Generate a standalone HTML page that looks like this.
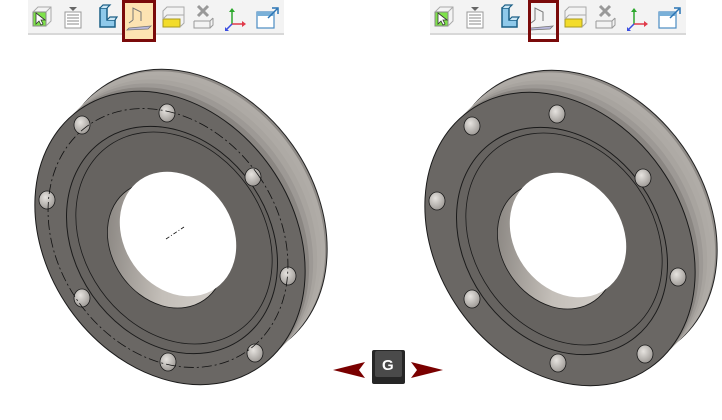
<!DOCTYPE html>
<html><head><meta charset="utf-8"><style>
html,body{margin:0;padding:0;background:#fff;width:722px;height:420px;overflow:hidden}
svg{display:block}
</style></head><body>
<svg width="722" height="420" viewBox="0 0 722 420" xmlns="http://www.w3.org/2000/svg">
<defs>
<linearGradient id="wall" x1="0" y1="0" x2="1" y2="1">
<stop offset="0" stop-color="#77736f"/><stop offset="0.5" stop-color="#c4bfb9"/><stop offset="1" stop-color="#dad6d1"/>
</linearGradient>
<radialGradient id="hole" cx="0.4" cy="0.35" r="0.7">
<stop offset="0" stop-color="#e6e3df"/><stop offset="1" stop-color="#9b9793"/>
</radialGradient>
<g id="tb">
<rect x="0" y="0" width="256" height="34" fill="#f3f3f3"/>
<rect x="0" y="33" width="256" height="2" fill="#d8d8d8"/>
<rect x="5" y="12" width="13" height="14" fill="#7ee24a" stroke="#888"/>
<path d="M5 12 l5 -5 h13 v14 l-5 5 M18 12 l5 -5" fill="none" stroke="#aaa"/>
<path d="M8 13 l0 11 l3 -3 l2 4 l2 -1 l-2 -4 l4 0z" fill="#fff" stroke="#333" stroke-width="0.8"/>
<path d="M41 7 h8 l-4 4z" fill="#666"/>
<rect x="37" y="12" width="16" height="16" fill="#fff" stroke="#999"/>
<path d="M39 15h12M39 18h12M39 21h12M39 24h12" stroke="#888"/>
<path d="M72 8 h7 v12 h8 v7 h-15z" fill="#8fc9ea" stroke="#1b5f86" stroke-width="1.5"/>
<path d="M72 8 l3 -3 h7 l-3 3 M79 20 l3 -3 h7 l-2 3" fill="#cde7f5" stroke="#1b5f86" stroke-width="1.2"/>
<path d="M105 20 v-12 l8 4 v9 M105 20 l-4 3" fill="none" stroke="#777" stroke-width="1"/>
<path d="M101 28 l22 -2 l-3 3 l-21 1z" fill="#b9b9dd" stroke="#777" stroke-width="0.8"/>
<rect x="135" y="19" width="17" height="8" fill="#f3dc2a" stroke="#aa9a20"/>
<path d="M135 19 l4 -4 h17 v8 l-4 4 M135 19 v-8 l4 -4 h17 v8" fill="none" stroke="#aaa"/>
<path d="M170 6 l10 10 M180 6 l-10 10" stroke="#999" stroke-width="3"/>
<path d="M166 21 h16 l3 -3 M166 21 v7 h16 v-7 M182 28 l3 -3 v-7" fill="none" stroke="#999"/>
<path d="M204 24 v-14" stroke="#2ca82c" stroke-width="1.5"/><path d="M201 12 l3 -4 l3 4z" fill="#2ca82c"/>
<path d="M204 24 h12" stroke="#e03a4a" stroke-width="1.5"/><path d="M214 21 l4 3 l-4 3z" fill="#e03a4a"/>
<path d="M204 24 l-5 5" stroke="#3a4de0" stroke-width="1.5"/><path d="M197 27 l0 4 l4 0z" fill="#3a4de0"/>
<rect x="229" y="12" width="17" height="16" fill="#fff" stroke="#4a8cc2" stroke-width="1.2"/>
<rect x="229" y="12" width="17" height="4" fill="#7ab0d8"/>
<path d="M240 18 l9 -9 M244 8 h6 v6" fill="none" stroke="#2b75b5" stroke-width="1.5"/>
</g>
</defs>

<use href="#tb" x="28" y="0"/>
<rect x="123.5" y="1.5" width="31" height="39" fill="#fde3b2" stroke="#7a0a0a" stroke-width="3"/>
<g transform="translate(28,0)">
<path d="M105 20 v-12 l8 4 v9 M105 20 l-4 3" fill="none" stroke="#777" stroke-width="1"/>
<path d="M101 28 l22 -2 l-3 3 l-21 1z" fill="#b9b9dd" stroke="#777" stroke-width="0.8"/>
</g>
<use href="#tb" x="430" y="0"/>
<rect x="529.5" y="1.5" width="28" height="39" fill="none" stroke="#7a0a0a" stroke-width="3"/>

<g id="flange">
<g>
<ellipse rx="123" ry="157" transform="translate(192,216) rotate(-35)" fill="#8e8a86" stroke="#222" stroke-width="1"/>
<ellipse rx="123" ry="157" transform="translate(190,218) rotate(-35)" fill="#b0aca7"/>
<ellipse rx="123" ry="157" transform="translate(186,222) rotate(-35)" fill="#aeaaa5"/>
<ellipse rx="123" ry="157" transform="translate(182,226) rotate(-35)" fill="#a8a49f"/>
<ellipse rx="123" ry="157" transform="translate(178,230) rotate(-35)" fill="#9d9995"/>
<ellipse rx="123" ry="157" transform="translate(174,234) rotate(-35)" fill="#8a8682"/>
</g>
<ellipse rx="123" ry="157" transform="translate(170,238) rotate(-35)" fill="#6a6764" stroke="#1a1a1a" stroke-width="1"/>
<ellipse rx="97" ry="121" transform="translate(172,240) rotate(-35)" fill="#666360" stroke="#1a1a1a" stroke-width="1"/>
<ellipse rx="90" ry="113" transform="translate(174,238) rotate(-35)" fill="none" stroke="#1a1a1a" stroke-width="0.8"/>
<ellipse rx="54" ry="67" transform="translate(166,245) rotate(-35)" fill="url(#wall)" stroke="#1a1a1a" stroke-width="0.8"/>
<ellipse rx="54" ry="66" transform="translate(178,234) rotate(-35)" fill="#fff"/>
<g fill="url(#hole)" stroke="#1a1a1a" stroke-width="0.8">
<ellipse cx="82" cy="125" rx="8" ry="9"/>
<ellipse cx="167" cy="113" rx="8" ry="9"/>
<ellipse cx="253" cy="177" rx="8" ry="9"/>
<ellipse cx="288" cy="276" rx="8" ry="9"/>
<ellipse cx="255" cy="353" rx="8" ry="9"/>
<ellipse cx="168" cy="362" rx="8" ry="9"/>
<ellipse cx="82" cy="298" rx="8" ry="9"/>
<ellipse cx="47" cy="200" rx="8" ry="9"/>
</g>
</g>
<ellipse rx="110" ry="138" transform="translate(168,238) rotate(-35)" fill="none" stroke="#111" stroke-width="0.8" stroke-dasharray="10 3 2 3"/>
<path d="M166 239 l18 -12" stroke="#111" stroke-width="0.8" stroke-dasharray="4 2 1 2"/>

<use href="#flange" x="390" y="1"/>

<path d="M333 370 l32 -8 l-6 8 l6 8z" fill="#7a0000"/>
<path d="M443 370 l-32 -8 l6 8 l-6 8z" fill="#7a0000"/>
<rect x="372" y="350" width="33" height="34" rx="2" fill="#262626"/>
<rect x="375" y="351" width="27" height="26" rx="2" fill="#4a4a4a"/>
<text x="382" y="370" font-family="Liberation Sans, sans-serif" font-size="15" font-weight="bold" fill="#fff">G</text>
</svg>
</body></html>
